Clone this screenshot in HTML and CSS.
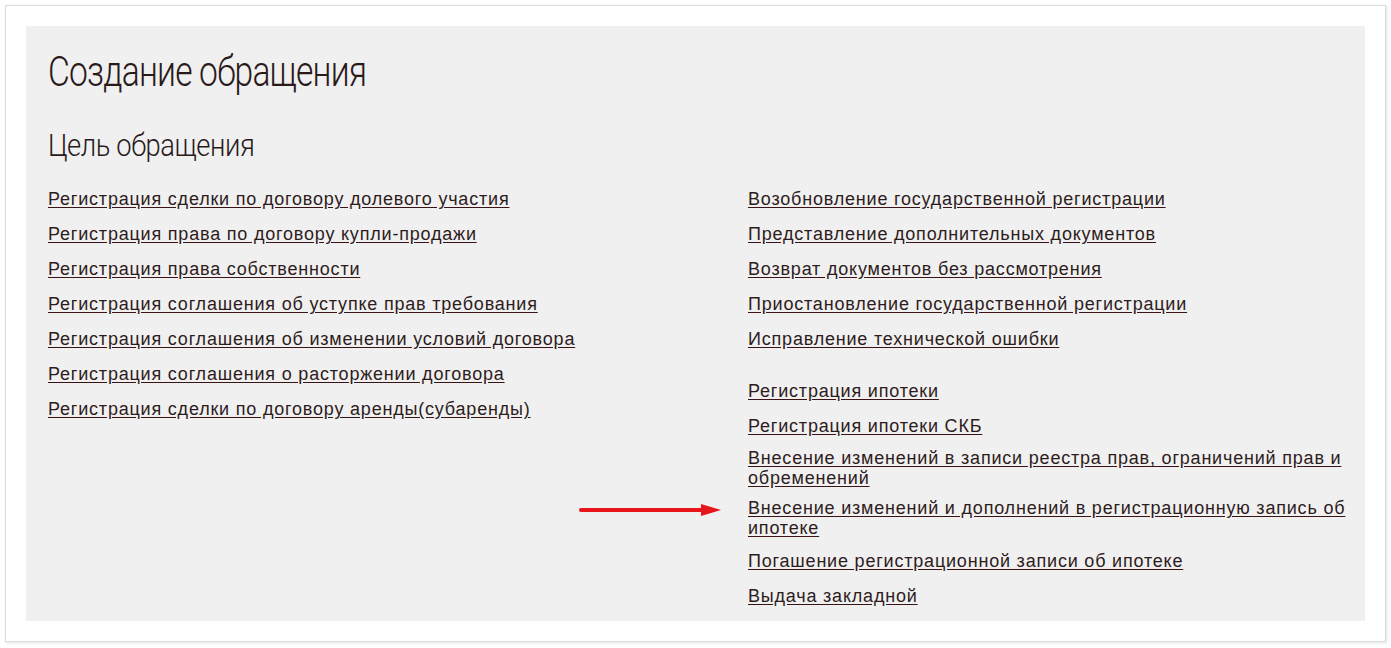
FILE: index.html
```html
<!DOCTYPE html>
<html lang="ru">
<head>
    <meta charset="UTF-8">
    <title>Создание обращения</title>
    <link rel="stylesheet" href="styles.css">
</head>
<body>
    <div class="frame">
        <div class="panel">
            <h1 class="page-title">Создание обращения</h1>
            <h2 class="section-title">Цель обращения</h2>
            <div class="purpose-grid">
                <ul class="purpose-list">
                    <li><a href="#">Регистрация сделки по договору долевого участия</a></li>
                    <li><a href="#">Регистрация права по договору купли-продажи</a></li>
                    <li><a href="#">Регистрация права собственности</a></li>
                    <li><a href="#">Регистрация соглашения об уступке прав требования</a></li>
                    <li><a href="#">Регистрация соглашения об изменении условий договора</a></li>
                    <li><a href="#">Регистрация соглашения о расторжении договора</a></li>
                    <li><a href="#">Регистрация сделки по договору аренды(субаренды)</a></li>
                </ul>
                <div class="purpose-col">
                    <ul class="purpose-list">
                        <li><a href="#">Возобновление государственной регистрации</a></li>
                        <li><a href="#">Представление дополнительных документов</a></li>
                        <li><a href="#">Возврат документов без рассмотрения</a></li>
                        <li><a href="#">Приостановление государственной регистрации</a></li>
                        <li><a href="#">Исправление технической ошибки</a></li>
                    </ul>
                    <ul class="purpose-list group">
                        <li><a href="#">Регистрация ипотеки</a></li>
                        <li><a href="#">Регистрация ипотеки СКБ</a></li>
                        <li class="long"><a href="#">Внесение изменений в записи реестра прав, ограничений прав и обременений</a></li>
                        <li class="long">
                            <svg class="pointer" width="142" height="14" viewBox="0 0 142 14">
                                <line x1="2" y1="7" x2="124" y2="7" stroke="#e8141b" stroke-width="4" stroke-linecap="round"/>
                                <polygon points="122,1 142,7 122,13" fill="#e8141b"/>
                            </svg>
                            <a href="#">Внесение изменений и дополнений в регистрационную запись об ипотеке</a>
                        </li>
                        <li><a href="#">Погашение регистрационной записи об ипотеке</a></li>
                        <li><a href="#">Выдача закладной</a></li>
                    </ul>
                </div>
            </div>
        </div>
    </div>
</body>
</html>
```

FILE: styles.css
```css
body {
    margin: 0;
    padding: 5px;
    background-color: #fff;
    font-family: "Liberation Sans", Arial, sans-serif;
    color: #2e1c1c;
}

.frame {
    border: 1px solid #dcdcdc;
    box-shadow: 1px 1px 3px rgba(0, 0, 0, 0.12);
    padding: 20px;
    height: 595px;
}

.panel {
    background-color: #f0f0f0;
    height: 100%;
    padding: 18px 15px 0 22px;
    box-sizing: border-box;
}

/* the original heading font is a light condensed face */
.page-title {
    font-family: Roboto, "Liberation Sans", sans-serif;
    font-weight: 300;
    font-size: 42px;
    line-height: 56px;
    letter-spacing: -1px;
    margin: 0 0 25px;
    color: #2a1a1a;
    transform: scaleX(0.8);
    transform-origin: left center;
}

.section-title {
    font-family: Roboto, "Liberation Sans", sans-serif;
    font-weight: 300;
    font-size: 32px;
    line-height: 40px;
    letter-spacing: -0.5px;
    margin: 0 0 24px;
    color: #2a1a1a;
    transform: scaleX(0.855);
    transform-origin: left center;
}

.purpose-grid {
    display: grid;
    grid-template-columns: 700px 1fr;
}

.purpose-list {
    list-style: none;
    margin: 0;
    padding: 0;
}

.purpose-list li {
    font-size: 18px;
    line-height: 20px;
    letter-spacing: 0.8px;
    margin-bottom: 15px;
    position: relative;
}

.purpose-list li.long {
    margin-top: -3px;
    margin-bottom: 13px;
}

.purpose-list.group {
    margin-top: 32px;
}

.purpose-list a {
    color: #2e1c1c;
    text-decoration: underline;
    text-decoration-color: #3a1414;
    text-underline-offset: 2px;
}

.pointer {
    position: absolute;
    left: -169px;
    top: 5px;
}
```
